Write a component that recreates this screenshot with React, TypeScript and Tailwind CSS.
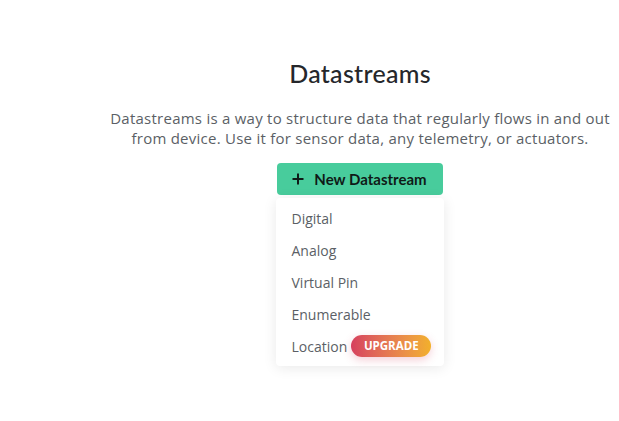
import React from "react";

export default function App() {
  const items = ["Digital", "Analog", "Virtual Pin", "Enumerable"];
  return (
    <div className="w-[619px] h-[421px] bg-white pl-[101px] pt-[57px]">
      <div className="flex flex-col items-center">
        <h1 className="text-[25px] leading-[32px] text-[#25272b] font-medium tracking-[0.3px]" style={{ fontFamily: "Lato, 'Open Sans', sans-serif" }}>
          Datastreams
        </h1>
        <p
          className="mt-[19px] text-center text-[15px] leading-[20px] text-[#5b5f66] w-[530px] tracking-[0.25px]"
          style={{ fontFamily: "'Open Sans', 'Noto Sans', sans-serif" }}
        >
          Datastreams is a way to structure data that regularly flows in and out
          <br />
          from device. Use it for sensor data, any telemetry, or actuators.
        </p>
        <div className="mt-[15px] flex flex-col">
          <button
            className="w-[166px] h-[32px] rounded-[4px] bg-[#48cc9c] flex items-center justify-center gap-[10px] text-[15px] font-bold text-[#0f1a17]"
            style={{ fontFamily: "Lato, 'Open Sans', sans-serif" }}
          >
            <svg width="12" height="12" viewBox="0 0 12 12">
              <path d="M6 0.5V11.5M0.5 6H11.5" stroke="#0f1a17" strokeWidth="2" />
            </svg>
            <span>New Datastream</span>
          </button>
          <div
            className="mt-[3px] ml-[-1px] w-[168px] bg-white rounded-[4px] shadow-[0_2px_14px_rgba(0,0,0,0.09)] py-[4px]"
            style={{ fontFamily: "'Open Sans', 'Noto Sans', sans-serif" }}
          >
            {items.map((t) => (
              <div key={t} className="h-[32px] flex items-center pl-[16px] text-[14px] text-[#5b5f66]">
                {t}
              </div>
            ))}
            <div className="h-[32px] flex items-center pl-[16px] text-[14px] text-[#5b5f66]">
              <span>Location</span>
              <span
                className="ml-[4px] h-[22px] w-[80px] rounded-full flex items-center justify-center text-[11.5px] font-bold text-white bg-gradient-to-r from-[#d6405e] to-[#f2b02a] shadow-[0_3px_8px_rgba(214,64,94,0.25)]"
                style={{ fontFamily: "'Open Sans', sans-serif" }}
              >
                UPGRADE
              </span>
            </div>
          </div>
        </div>
      </div>
    </div>
  );
}
